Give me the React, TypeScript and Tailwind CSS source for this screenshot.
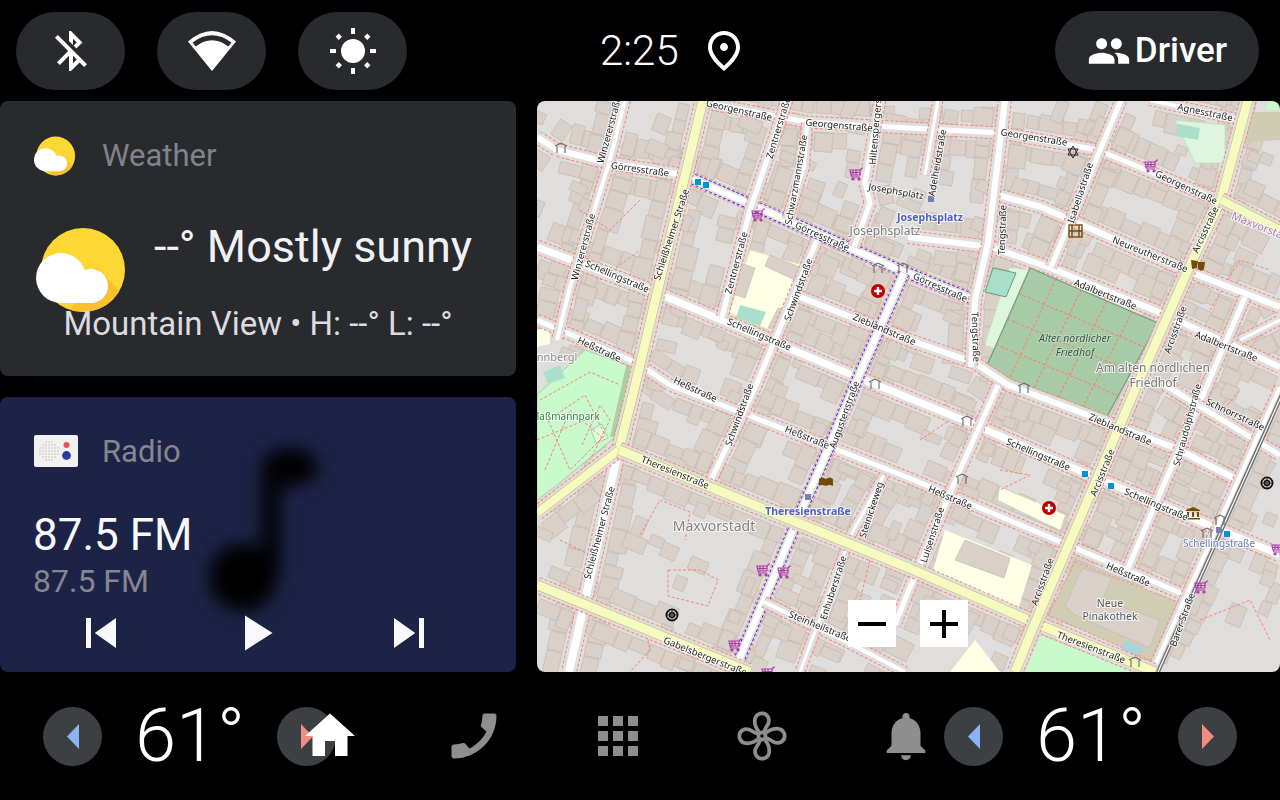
import React from "react";

type Road = { p: number[][]; w: number; k?: "y" | "w"; cycle?: boolean; side?: boolean };

const roads: Road[] = [
  { p: [[707, 103], [807, 122], [909, 128], [1001, 133], [1098, 150], [1218, 200]], w: 5 },
  { p: [[1150, 100], [1250, 122]], w: 4 },
  { p: [[537, 137], [557, 150], [609, 163], [684, 175]], w: 6 },
  { p: [[684, 175], [900, 270], [975, 300]], w: 6, cycle: true },
  { p: [[991, 193], [1041, 207], [1185, 270], [1280, 307]], w: 6 },
  { p: [[908, 237], [991, 247], [1048, 267], [1161, 313], [1280, 367]], w: 6 },
  { p: [[537, 247], [650, 290], [857, 377], [968, 422], [1085, 473], [1280, 555]], w: 7 },
  { p: [[537, 320], [637, 363], [670, 385], [830, 447], [909, 478], [1068, 545], [1185, 595]], w: 5 },
  { p: [[800, 297], [909, 340], [975, 363], [1008, 385], [1175, 448], [1238, 480]], w: 6 },
  { p: [[787, 100], [750, 210], [722, 317]], w: 5 },
  { p: [[817, 240], [754, 390], [710, 482]], w: 5 },
  { p: [[807, 123], [804, 167], [787, 220]], w: 4 },
  { p: [[880, 100], [865, 183], [870, 203], [854, 247]], w: 5 },
  { p: [[625, 100], [609, 163], [570, 287], [557, 340]], w: 4 },
  { p: [[904, 273], [857, 380], [830, 445], [794, 528], [734, 672]], w: 6, cycle: true },
  { p: [[1005, 100], [988, 243], [975, 300], [971, 367]], w: 6 },
  { p: [[998, 385], [960, 470], [908, 592], [895, 625]], w: 5 },
  { p: [[1121, 100], [1051, 267]], w: 5 },
  { p: [[1245, 297], [1205, 390], [1171, 468], [1128, 568]], w: 5 },
  { p: [[1165, 385], [1255, 440], [1280, 455]], w: 5 },
  { p: [[764, 602], [847, 642], [905, 672]], w: 4 },
  { p: [[884, 475], [851, 535], [820, 618], [800, 672]], w: 3 },
  { p: [[1280, 387], [1152, 672]], w: 4 },
  { p: [[617, 457], [569, 672]], w: 8 },
  { p: [[938, 100], [925, 175]], w: 3 },
  { p: [[1240, 340], [1280, 320]], w: 3 },
  { p: [[703, 100], [634, 390], [619, 450]], w: 9, k: "y" },
  { p: [[619, 450], [537, 513]], w: 8, k: "y" },
  { p: [[619, 450], [909, 568], [1035, 623], [1155, 672]], w: 9, k: "y" },
  { p: [[537, 585], [750, 672]], w: 9, k: "y" },
  { p: [[1248, 100], [1221, 200], [1188, 270], [1135, 390], [1035, 623], [1015, 672]], w: 9, k: "y" },
  { p: [[1221, 200], [1280, 230]], w: 8, k: "y" },
];

let seed = 48271;
const rnd = () => {
  seed = (seed * 16807) % 2147483647;
  return seed / 2147483647;
};

type B = { x: number; y: number; a: number; w: number; h: number };
const buildings: B[] = [];
for (const road of roads) {
  for (let i = 0; i < road.p.length - 1; i++) {
    const [x0, y0] = road.p[i];
    const [x1, y1] = road.p[i + 1];
    const L = Math.hypot(x1 - x0, y1 - y0);
    const ux = (x1 - x0) / L;
    const uy = (y1 - y0) / L;
    const a = (Math.atan2(uy, ux) * 180) / Math.PI;
    for (const s of [-1, 1]) {
      let t = 6 + rnd() * 6;
      while (t < L - 6) {
        const b = 11 + rnd() * 13;
        const d = 11 + rnd() * 9;
        const off = road.w / 2 + 7 + d / 2;
        if (rnd() > 0.1) {
          buildings.push({
            x: x0 + ux * (t + b / 2) - uy * s * off,
            y: y0 + uy * (t + b / 2) + ux * s * off,
            a,
            w: b,
            h: d,
          });
        }
        t += b + 1;
      }
    }
  }
}
for (let i = 0; i < 170; i++) {
  const vert = rnd() > 0.5;
  buildings.push({
    x: 537 + rnd() * 743,
    y: 100 + rnd() * 572,
    a: vert ? -68 : 23,
    w: 10 + rnd() * 14,
    h: 8 + rnd() * 8,
  });
}

const lerp = (a: number[], b: number[], t: number) => [a[0] + (b[0] - a[0]) * t, a[1] + (b[1] - a[1]) * t];
const FA = [1030, 268];
const FB = [1158, 323];
const FC = [1105, 420];
const FD = [985, 370];

const foot: string[] = [
  "668,570 700,570 718,580 708,606 668,596 668,570",
  "640,535 660,500 690,512 685,540",
  "644,620 650,650 630,672",
  "582,445 600,405 610,420 590,460",
  "540,400 590,372 620,385",
  "545,470 570,410 605,440",
  "1000,470 1030,475 1000,490",
  "580,210 610,230 640,200",
  "600,280 640,250",
  "830,540 870,560 860,600",
  "1200,620 1250,600 1270,640",
  "1215,420 1240,390",
  "920,440 950,420 945,400",
  "1210,310 1240,260 1270,270",
  "560,540 600,560 590,610",
];

type L = [string, number, number, number, number?, string?, string?];
const labels: L[] = [
  ["Georgenstraße", 739, 111, 13],
  ["Georgenstraße", 839, 126, 5],
  ["Georgenstraße", 1034, 138, 9],
  ["Georgenstraße", 1186, 188, 25],
  ["Agnesstraße", 1205, 113, 12],
  ["Görresstraße", 640, 170, 8],
  ["Görresstraße", 822, 237, 24],
  ["Görresstraße", 940, 288, 24],
  ["Winzererstraße", 610, 130, -75],
  ["Winzererstraße", 584, 247, -75],
  ["Zentnerstraße", 779, 128, -73],
  ["Zentnerstraße", 737, 263, -75],
  ["Schwarzmannstraße", 797, 180, -80],
  ["Hiltenspergerstraße", 877, 120, -85],
  ["Josephsplatz", 896, 192, 10],
  ["Schleißheimer Straße", 672, 235, -72],
  ["Schellingstraße", 617, 277, 23],
  ["Schellingstraße", 759, 335, 23],
  ["Schwindstraße", 799, 290, -70],
  ["Zieblandstraße", 884, 330, 23],
  ["Heßstraße", 599, 350, 25],
  ["Heßstraße", 695, 390, 25],
  ["Josephsplatz", 930, 218, 0, 10.5, "#4d5fbf", "700"],
  ["Josephsplatz", 885, 232, 0, 12, "#7a7a7a"],
  ["Adelheidstraße", 938, 163, -80],
  ["Tengstraße", 1003, 230, -88],
  ["Tengstraße", 975, 337, 88],
  ["Isabellastraße", 1081, 193, -72],
  ["Neureutherstraße", 1150, 255, 22],
  ["Arcisstraße", 1206, 230, -65],
  ["Adalbertstraße", 1105, 295, 22],
  ["Adalbertstraße", 1226, 347, 22],
  ["Arcisstraße", 1176, 330, -70],
  ["Maxvorstadt", 1262, 228, 22, 11, "#a47ca4"],
  ["Schwindstraße", 740, 415, -70],
  ["Heßstraße", 807, 438, 22],
  ["Augustenstraße", 845, 415, -70],
  ["Theresienstraße", 675, 473, 22],
  ["Theresienstraße", 808, 512, 0, 10.5, "#4d5fbf", "700"],
  ["Maxvorstadt", 714, 527, 0, 14, "#808080"],
  ["Schleißheimer Straße", 600, 533, -75],
  ["Steinickeweg", 872, 510, -72],
  ["Enhuberstraße", 834, 588, -72],
  ["Steinheilstraße", 820, 627, 22],
  ["Gabelsbergerstraße", 705, 657, 22],
  ["Maßmannpark", 565, 417, 0, 10, "#2a8a3a"],
  ["nnbergl", 557, 358, 0, 11, "#8a8a8a"],
  ["Luisenstraße", 933, 535, -72],
  ["Schellingstraße", 1038, 455, 23],
  ["Schellingstraße", 1156, 505, 23],
  ["Zieblandstraße", 1120, 430, 23],
  ["Arcisstraße", 1103, 473, -68],
  ["Heßstraße", 950, 498, 23],
  ["Heßstraße", 1128, 575, 23],
  ["Arcisstraße", 1043, 582, -70],
  ["Schraudolphstraße", 1188, 425, -75],
  ["Schnorrstraße", 1235, 415, 25],
  ["Schellingstraße", 1219, 544, 0, 10, "#6c78c0"],
  ["Barer Straße", 1183, 620, -70],
  ["Neue", 1110, 604, 0, 10.5, "#555"],
  ["Pinakothek", 1110, 617, 0, 10.5, "#555"],
  ["Theresienstraße", 1091, 648, 21],
  ["Am alten nördlichen", 1153, 369, 0, 12, "#777"],
  ["Friedhof", 1153, 384, 0, 12, "#777"],
];

const pts = (p: number[][]) => p.map((q) => q.join(",")).join(" ");

function Cart({ x, y }: { x: number; y: number }) {
  return (
    <g transform={`translate(${x - 7} ${y - 7})`} fill="none" stroke="#ac39ac" strokeWidth="1.2">
      <path d="M1 3h10v5H2zM1 5.5h10M4 3v5M7 3v5M11 3l2-2h1M2 8l1 2h8" />
      <circle cx="4" cy="12" r="1" fill="#ac39ac" />
      <circle cx="10" cy="12" r="1" fill="#ac39ac" />
    </g>
  );
}

function Gate({ x, y }: { x: number; y: number }) {
  return (
    <path
      transform={`translate(${x - 6} ${y - 6})`}
      d="M0 4L6 1L12 4M2 4v7M10 4v7"
      fill="none"
      stroke="#666"
      strokeWidth="1.1"
    />
  );
}

function Hospital({ x, y }: { x: number; y: number }) {
  return (
    <g>
      <circle cx={x} cy={y} r="7" fill="#bd0000" />
      <path d={`M${x - 4} ${y}h8M${x} ${y - 4}v8`} stroke="#fff" strokeWidth="2.4" />
    </g>
  );
}

function Wheel({ x, y }: { x: number; y: number }) {
  return (
    <g fill="none" stroke="#111">
      <circle cx={x} cy={y} r="5.6" strokeWidth="1.8" />
      <circle cx={x} cy={y} r="2.5" strokeWidth="1.6" />
      <path d={`M${x - 6} ${y}h12M${x} ${y - 6}v12`} strokeWidth="0.8" />
    </g>
  );
}

function MapCanvas() {
  const inner: React.ReactNode[] = [];
  for (let i = 1; i < 5; i++) {
    const a = lerp(FA, FB, i / 5);
    const b = lerp(FD, FC, i / 5);
    inner.push(<line key={`a${i}`} x1={a[0]} y1={a[1]} x2={b[0]} y2={b[1]} stroke="#fa8072" strokeWidth="1.1" strokeDasharray="3 2" />);
  }
  for (let i = 1; i < 4; i++) {
    const a = lerp(FA, FD, i / 4);
    const b = lerp(FB, FC, i / 4);
    inner.push(<line key={`b${i}`} x1={a[0]} y1={a[1]} x2={b[0]} y2={b[1]} stroke="#fa8072" strokeWidth="1.1" strokeDasharray="3 2" />);
  }
  return (
    <svg viewBox="537 101 743 571" className="block w-full h-full blur-[0.3px]" preserveAspectRatio="none">
      <rect x="537" y="101" width="743" height="571" fill="#dfdedd" />
      {buildings.map((b, i) => (
        <rect
          key={i}
          x={-b.w / 2}
          y={-b.h / 2}
          width={b.w}
          height={b.h}
          transform={`translate(${b.x.toFixed(1)} ${b.y.toFixed(1)}) rotate(${b.a.toFixed(1)})`}
          fill="#d9d0c9"
          stroke="#c6b9ae"
          strokeWidth="0.7"
        />
      ))}

      <polygon points="537,395 585,350 630,366 615,437 557,485 537,500" fill="#c8facc" stroke="#a9cfa5" />
      <polygon points="615,437 630,366 627,362 610,437" fill="#a9cfa5" />
      <polygon points="543,372 560,365 565,378 548,384" fill="#aae0cb" />
      <polygon points="591,430 602,424 608,438 596,443" fill="#dffadf" stroke="#8fbf8f" strokeWidth="0.7" />
      <polygon points="537,330 550,326 550,344 537,347" fill="#ffffe5" />
      <polyline points="548,420 585,395 605,435 570,470 548,420" fill="none" stroke="#fa8072" strokeWidth="1" strokeDasharray="3 2" />
      <polyline points="537,440 585,420" fill="none" stroke="#fa8072" strokeWidth="1" strokeDasharray="3 2" />

      <polygon points="750,250 802,265 774,332 729,313" fill="#ffffe5" stroke="#ece6b0" />
      <polygon points="737,262 755,268 745,298 733,294" fill="#d9d0c9" stroke="#c6b9ae" strokeWidth="0.7" />
      <polygon points="770,255 802,268 795,280 765,266" fill="#d9d0c9" stroke="#c6b9ae" strokeWidth="0.7" />
      <polygon points="740,305 766,312 760,326 736,318" fill="#aae0cb" />
      <polygon points="778,308 790,312 776,330 768,328" fill="#d9d0c9" stroke="#c6b9ae" strokeWidth="0.7" />

      <polygon points="1010,268 1030,270 1000,350 985,345" fill="#def6de" />
      <polygon points={pts([FA, FB, FC, FD])} fill="#a6cba6" stroke="#6f9a78" strokeWidth="1.2" />
      {inner}
      <polygon points="993,268 1016,273 1006,297 985,292" fill="#aae0cb" stroke="#6f9a78" />
      <polygon points="1175,120 1225,125 1225,163 1195,163" fill="#def6de" stroke="#b0e0b0" strokeWidth="0.6" />
      <polygon points="1178,124 1200,128 1198,140 1176,136" fill="#aae0cb" />
      <polygon points="1240,112 1280,112 1280,140 1238,143" fill="#cfccb4" />
      <polygon points="1270,101 1280,101 1280,110 1265,110" fill="#c8facc" />

      <polygon points="1075,562 1178,602 1155,662 1048,615" fill="#cfcdb4" stroke="#fa8072" strokeDasharray="3 2" strokeWidth="0.8" />
      <polygon points="1082,568 1112,578 1102,600 1160,620 1150,648 1075,615 1065,606" fill="#d9d0c9" stroke="#c6b9ae" strokeWidth="0.7" />
      <polygon points="1125,640 1145,648 1138,655 1122,650" fill="#aad3df" />
      <polygon points="1041,635 1135,672 1025,672" fill="#c8facc" />
      <polygon points="1000,487 1065,515 1060,530 998,500" fill="#ffffe5" />
      <polygon points="945,530 1032,565 1018,610 930,580" fill="#ffffe5" />
      <polygon points="965,540 1010,558 1004,578 955,560" fill="#d9d0c9" stroke="#c6b9ae" strokeWidth="0.7" />
      <polygon points="975,640 1000,672 950,672" fill="#ffffe5" />
      <polygon points="925,595 980,615 965,640 915,620" fill="#d9d0c9" stroke="#c6b9ae" strokeWidth="0.7" />

      {foot.map((f, i) => (
        <polyline key={i} points={f} fill="none" stroke="#fa8072" strokeWidth="1" strokeDasharray="3 2" />
      ))}

      {roads.map((r, i) => (
        <g key={i} fill="none">
          <polyline points={pts(r.p)} stroke="#fa8072" strokeWidth={r.w + 8} strokeDasharray="3 2" />
          <polyline points={pts(r.p)} stroke="#dfdedd" strokeWidth={r.w + 6} />
          {r.cycle && <polyline points={pts(r.p)} stroke="#0000ff" strokeWidth={r.w + 5} strokeDasharray="3 2" />}
          {r.cycle && <polyline points={pts(r.p)} stroke="#dfdedd" strokeWidth={r.w + 3.6} />}
          {r.k === "y" && <polyline points={pts(r.p)} stroke="#b8b878" strokeWidth={r.w + 1} />}
          <polyline points={pts(r.p)} stroke={r.k === "y" ? "#f7fabf" : "#ffffff"} strokeWidth={r.w} strokeLinejoin="round" />
        </g>
      ))}
      <line x1="1284" y1="390" x2="1158" y2="672" stroke="#707070" strokeWidth="4" />
      <line x1="1284" y1="390" x2="1158" y2="672" stroke="#ffffff" strokeWidth="1.2" />

      {[[698, 182], [706, 185], [1085, 474], [1111, 486], [1227, 534]].map(([x, y], i) => (
        <rect key={i} x={x - 3} y={y - 3} width="6" height="6" fill="#0092da" />
      ))}
      {[[931, 199], [808, 497], [1219, 530]].map(([x, y], i) => (
        <rect key={i} x={x - 3} y={y - 3} width="6" height="6" fill="#7981b0" />
      ))}

      {[[856, 174], [758, 215], [1151, 166], [1201, 587], [1278, 549], [763, 570], [784, 572], [735, 645], [768, 673]].map(([x, y], i) => (
        <Cart key={i} x={x} y={y} />
      ))}
      {[[561, 148], [878, 268], [903, 268], [875, 384], [1024, 388], [967, 421], [962, 479], [1220, 520], [1207, 533], [1135, 662]].map(([x, y], i) => (
        <Gate key={i} x={x} y={y} />
      ))}
      <Hospital x={878} y={291} />
      <Hospital x={1049} y={508} />
      <Wheel x={1267} y={483} />
      <Wheel x={672} y={615} />

      <path d="M1073 146l5 9h-10zM1073 158l-5-9h10z" fill="none" stroke="#222" strokeWidth="1" />
      <g fill="none" stroke="#734a08" strokeWidth="1.4">
        <rect x="1069" y="225" width="13" height="12" />
        <path d="M1072 225v12M1079 225v12M1069 231h13" />
      </g>
      <path d="M1191 260l7 1-1 7-5 1zM1198 262h7l-1 7-3 2-3-2z" fill="#734a08" />
      <path d="M819 479q3-3 7 0q4-3 7 0v7q-4-2-7 0q-4-2-7 0z" fill="#734a08" />
      <path d="M1186 510l7-3 7 3v1h-14zM1187 512h2v5h-2zM1192 512h2v5h-2zM1197 512h2v5h-2zM1186 518h14v1.5h-14z" fill="#734a08" />

      {labels.map(([t, x, y, a, size, color, weight], i) => (
        <text
          key={i}
          x={x}
          y={y}
          transform={`rotate(${a} ${x} ${y})`}
          textAnchor="middle"
          dominantBaseline="middle"
          fontFamily="Noto Sans, sans-serif"
          fontSize={size ?? 9.5}
          fontWeight={weight ?? "400"}
          fill={color ?? "#222"}
          stroke="#ffffff"
          strokeOpacity="0.8"
          strokeWidth="2"
          paintOrder="stroke"
        >
          {t}
        </text>
      ))}
      <text x="1075" y="342" textAnchor="middle" fontFamily="Noto Sans, sans-serif" fontStyle="italic" fontSize="10.5" fill="#35523f" stroke="#c8e0c8" strokeWidth="1.5" paintOrder="stroke">
        Alter nördlicher
      </text>
      <text x="1075" y="356" textAnchor="middle" fontFamily="Noto Sans, sans-serif" fontStyle="italic" fontSize="10.5" fill="#35523f" stroke="#c8e0c8" strokeWidth="1.5" paintOrder="stroke">
        Friedhof
      </text>
    </svg>
  );
}

function Pill({ children }: { children: React.ReactNode }) {
  return <div className="w-[109px] h-[78px] rounded-full bg-[#292a2e] flex items-center justify-center">{children}</div>;
}

function WeatherIcon({ className }: { className: string }) {
  return (
    <svg viewBox="0 0 91 86" className={className}>
      <defs>
        <clipPath id="sun-clip">
          <circle cx="47" cy="43" r="42" />
        </clipPath>
      </defs>
      <circle cx="47" cy="43" r="42" fill="#fdd835" />
      <polygon points="60,40 95,75 95,90 30,90" fill="#fbc02d" clipPath="url(#sun-clip)" />
      <circle cx="25" cy="51" r="25" fill="#fff" />
      <circle cx="55" cy="59" r="17" fill="#fff" />
      <rect x="25" y="51" width="32" height="25" fill="#fff" />
    </svg>
  );
}

function Climate() {
  return (
    <div className="flex items-center w-[294px] shrink-0">
      <div className="w-[59px] h-[59px] rounded-full bg-[#3c4043] flex items-center justify-center shrink-0">
        <svg viewBox="0 0 12 25" className="w-[12px] h-[25px]">
          <polygon points="12,0 0,12.5 12,25" fill="#8ab4f8" />
        </svg>
      </div>
      <div className="ml-[33px] w-[109px] text-[74px] leading-none text-white font-light shrink-0">61°</div>
      <div className="ml-[33px] w-[59px] h-[59px] rounded-full bg-[#3c4043] flex items-center justify-center shrink-0">
        <svg viewBox="0 0 12 25" className="w-[12px] h-[25px]">
          <polygon points="0,0 12,12.5 0,25" fill="#f28b82" />
        </svg>
      </div>
    </div>
  );
}

function NavCell({ children }: { children: React.ReactNode }) {
  return <div className="w-[144px] flex items-center justify-center">{children}</div>;
}

export default function App() {
  return (
    <div className="w-[1280px] h-[800px] bg-black flex flex-col overflow-hidden [font-family:Roboto,sans-serif] text-white">
      <div className="h-[101px] flex items-start shrink-0">
        <div className="flex gap-[32px] pl-[16px] pt-[12px]">
          <Pill>
            <svg viewBox="0 0 24 24" className="w-[48px] h-[48px]" fill="#fff">
              <path d="M13 5.83l1.88 1.88-1.6 1.6 1.41 1.41 3.02-3.02L12 2h-1v5.03l2 2v-3.2zM5.41 4L4 5.41 10.59 12 5 17.59 6.41 19 11 14.41V22h1l4.29-4.29 2.3 2.29L20 18.59 5.41 4zM13 18.17v-3.76l1.88 1.88L13 18.17z" />
            </svg>
          </Pill>
          <Pill>
            <svg viewBox="0 0 48 40" className="w-[48px] h-[40px]" fill="#fff">
              <path
                fillRule="evenodd"
                d="M0 10.5Q24-10.5 48 10.5L24 40ZM4.5 11.5 7.8 15.5Q24 3 40.2 15.5L43.5 11.5Q24-3 4.5 11.5Z"
              />
            </svg>
          </Pill>
          <Pill>
            <svg viewBox="0 0 48 48" className="w-[48px] h-[48px]" fill="#fff">
              <circle cx="24" cy="24" r="12" />
              <rect x="22" y="1" width="4" height="6" />
              <rect x="22" y="41" width="4" height="6" />
              <rect x="1" y="22" width="6" height="4" />
              <rect x="41" y="22" width="6" height="4" />
              <rect x="7.5" y="7.5" width="4.5" height="4.5" transform="rotate(45 9.75 9.75)" />
              <rect x="36" y="7.5" width="4.5" height="4.5" transform="rotate(45 38.25 9.75)" />
              <rect x="7.5" y="36" width="4.5" height="4.5" transform="rotate(45 9.75 38.25)" />
              <rect x="36" y="36" width="4.5" height="4.5" transform="rotate(45 38.25 38.25)" />
            </svg>
          </Pill>
        </div>
        <div className="ml-[193px] h-[101px] flex items-center pb-[0px]">
          <div className="text-[42px] leading-none font-light">2:25</div>
          <svg viewBox="0 0 24 24" className="w-[48px] h-[48px] ml-[21px]" fill="#fff">
            <path d="M12 12c-1.1 0-2-.9-2-2s.9-2 2-2 2 .9 2 2-.9 2-2 2zm6-1.8C18 6.57 15.35 4 12 4s-6 2.57-6 6.2c0 2.34 1.95 5.44 6 9.14 4.05-3.7 6-6.8 6-9.14zM12 2c4.2 0 8 3.22 8 8.2 0 3.32-2.67 7.25-8 11.8-5.33-4.55-8-8.48-8-11.8C4 5.22 7.8 2 12 2z" />
          </svg>
        </div>
        <div className="ml-auto mr-[21px] mt-[11px] w-[204px] h-[79px] rounded-full bg-[#292a2e] flex items-center justify-center gap-[4px]">
          <svg viewBox="0 0 24 24" className="w-[44px] h-[44px]" fill="#fff">
            <path d="M16 11c1.66 0 2.99-1.34 2.99-3S17.66 5 16 5c-1.66 0-3 1.34-3 3s1.34 3 3 3zm-8 0c1.66 0 2.99-1.34 2.99-3S9.66 5 8 5C6.34 5 5 6.34 5 8s1.34 3 3 3zm0 2c-2.33 0-7 1.17-7 3.5V19h14v-2.5c0-2.33-4.67-3.5-7-3.5zm8 0c-.29 0-.62.02-.97.05 1.16.84 1.97 1.97 1.97 3.45V19h6v-2.5c0-2.33-4.67-3.5-7-3.5z" />
          </svg>
          <div className="text-[35px] leading-none font-medium">Driver</div>
        </div>
      </div>

      <div className="h-[571px] flex gap-[21px] shrink-0">
        <div className="w-[516px] flex flex-col gap-[21px] shrink-0">
          <div className="h-[275px] rounded-[8px] bg-[#292a2e] flex flex-col">
            <div className="flex items-center pl-[34px] pt-[34px] h-[75px]">
              <WeatherIcon className="w-[42px] h-[40px]" />
              <div className="ml-[26px] text-[31px] leading-none text-[#80838c]">Weather</div>
            </div>
            <div className="flex items-start pl-[36px] mt-[51px]">
              <WeatherIcon className="w-[91px] h-[86px]" />
              <div className="ml-[27px] -mt-[3px] text-[45px] leading-none text-[#f1f1f5]">--° Mostly sunny</div>
            </div>
            <div className="-mt-[6px] text-center text-[33px] leading-none text-[#dcdce0]">Mountain View • H: --° L: --°</div>
          </div>

          <div className="relative h-[275px] rounded-[8px] bg-[#1d2347] overflow-hidden flex flex-col">
            <svg viewBox="0 0 516 275" className="absolute inset-0 w-full h-full blur-[9px]" fill="#000">
              <ellipse cx="243" cy="180" rx="34" ry="34" />
              <rect x="262" y="60" width="18" height="115" />
              <ellipse cx="290" cy="70" rx="28" ry="19" />
            </svg>
            <div className="relative flex items-center pl-[34px] pt-[38px] h-[70px]">
              <svg viewBox="0 0 44 32" className="w-[44px] h-[32px]">
                <rect width="44" height="32" rx="2" fill="#f1f1f1" />
                {[0, 1, 2, 3, 4, 5, 6].map((r) =>
                  [0, 1, 2, 3, 4, 5, 6].map((c) =>
                    Math.hypot(r - 3, c - 3) < 3.4 ? (
                      <circle key={`${r}${c}`} cx={6 + c * 3} cy={7 + r * 3} r="0.7" fill="#b5b5b5" />
                    ) : null
                  )
                )}
                <circle cx="32.5" cy="10" r="3" fill="#f05050" />
                <circle cx="32.5" cy="20.5" r="4.4" fill="#2a3a9f" />
              </svg>
              <div className="ml-[24px] text-[31px] leading-none text-[#85868f]">Radio</div>
            </div>
            <div className="relative pl-[33px] mt-[46px] text-[44px] leading-none text-[#f8f8fb]">87.5 FM</div>
            <div className="relative pl-[33px] mt-[8px] text-[32px] leading-none text-[#85868f]">87.5 FM</div>
            <div className="relative flex mt-[6px] pl-[71px] gap-[94px]">
              <svg viewBox="0 0 24 24" className="w-[60px] h-[60px]" fill="#f8f9fb">
                <path d="M6 6h2v12H6zm3.5 6l8.5 6V6z" />
              </svg>
              <svg viewBox="0 0 24 24" className="w-[60px] h-[60px]" fill="#f8f9fb">
                <path d="M8 5v14l11-7z" />
              </svg>
              <svg viewBox="0 0 24 24" className="w-[60px] h-[60px]" fill="#f8f9fb">
                <path d="M6 18l8.5-6L6 6v12zM16 6v12h2V6h-2z" />
              </svg>
            </div>
          </div>
        </div>

        <div className="relative flex-1 rounded-[8px] overflow-hidden">
          <MapCanvas />
          <div className="absolute left-[311px] top-[499px] flex gap-[24px]">
            <div className="w-[48px] h-[47px] bg-white flex items-center justify-center">
              <div className="w-[28px] h-[4px] bg-black" />
            </div>
            <div className="w-[48px] h-[47px] bg-white flex items-center justify-center">
              <svg viewBox="0 0 28 28" className="w-[28px] h-[28px]" fill="#000">
                <rect x="0" y="12" width="28" height="4" />
                <rect x="12" y="0" width="4" height="28" />
              </svg>
            </div>
          </div>
        </div>
      </div>

      <div className="flex-1 flex items-center pl-[43px]">
        <Climate />
        <div className="-ml-[79px] flex">
          <NavCell>
            <svg viewBox="0 0 24 24" className="w-[60px] h-[60px]" fill="#fff">
              <path d="M10 20v-6h4v6h5v-8h3L12 3 2 12h3v8z" />
            </svg>
          </NavCell>
          <NavCell>
            <svg viewBox="0 0 24 24" className="w-[60px] h-[60px] -scale-x-100" fill="#8e8e8e">
              <path d="M20.01 15.38c-1.23 0-2.42-.2-3.53-.56-.35-.12-.74-.03-1.01.24l-1.57 1.97c-2.83-1.35-5.48-3.9-6.89-6.83l1.95-1.66c.27-.28.35-.67.24-1.02-.37-1.11-.56-2.3-.56-3.53 0-.54-.45-.99-.99-.99H4.19C3.65 3 3 3.24 3 3.99 3 13.28 10.73 21 20.01 21c.71 0 .99-.63.99-1.18v-3.45c0-.54-.45-.99-.99-.99z" />
            </svg>
          </NavCell>
          <NavCell>
            <svg viewBox="0 0 24 24" className="w-[60px] h-[60px]" fill="#8e8e8e">
              <path d="M4 8h4V4H4v4zm6 12h4v-4h-4v4zm-6 0h4v-4H4v4zm0-6h4v-4H4v4zm6 0h4v-4h-4v4zm6-10v4h4V4h-4zm-6 4h4V4h-4v4zm6 6h4v-4h-4v4zm0 6h4v-4h-4v4z" />
            </svg>
          </NavCell>
          <NavCell>
            <svg viewBox="0 0 48 48" className="w-[50px] h-[50px]" fill="none" stroke="#8e8e8e" strokeWidth="3.6">
              {[0, 90, 180, 270].map((a) => (
                <path key={a} transform={`rotate(${a} 24 24)`} d="M21 20C16 14 15 5 22 2.5C29 1 33 8 29 14C27 17 26 19 26 21" />
              ))}
              <circle cx="24" cy="24" r="3.4" />
            </svg>
          </NavCell>
          <NavCell>
            <svg viewBox="0 0 24 24" className="w-[58px] h-[58px]" fill="#8e8e8e">
              <path d="M12 22c1.1 0 2-.9 2-2h-4c0 1.1.89 2 2 2zm6-6v-5c0-3.07-1.64-5.64-4.5-6.32V4c0-.83-.67-1.5-1.5-1.5s-1.5.67-1.5 1.5v.68C7.63 5.36 6 7.92 6 11v5l-2 2v1h16v-1l-2-2z" />
            </svg>
          </NavCell>
        </div>
        <div className="-ml-[34px]">
          <Climate />
        </div>
      </div>
    </div>
  );
}
